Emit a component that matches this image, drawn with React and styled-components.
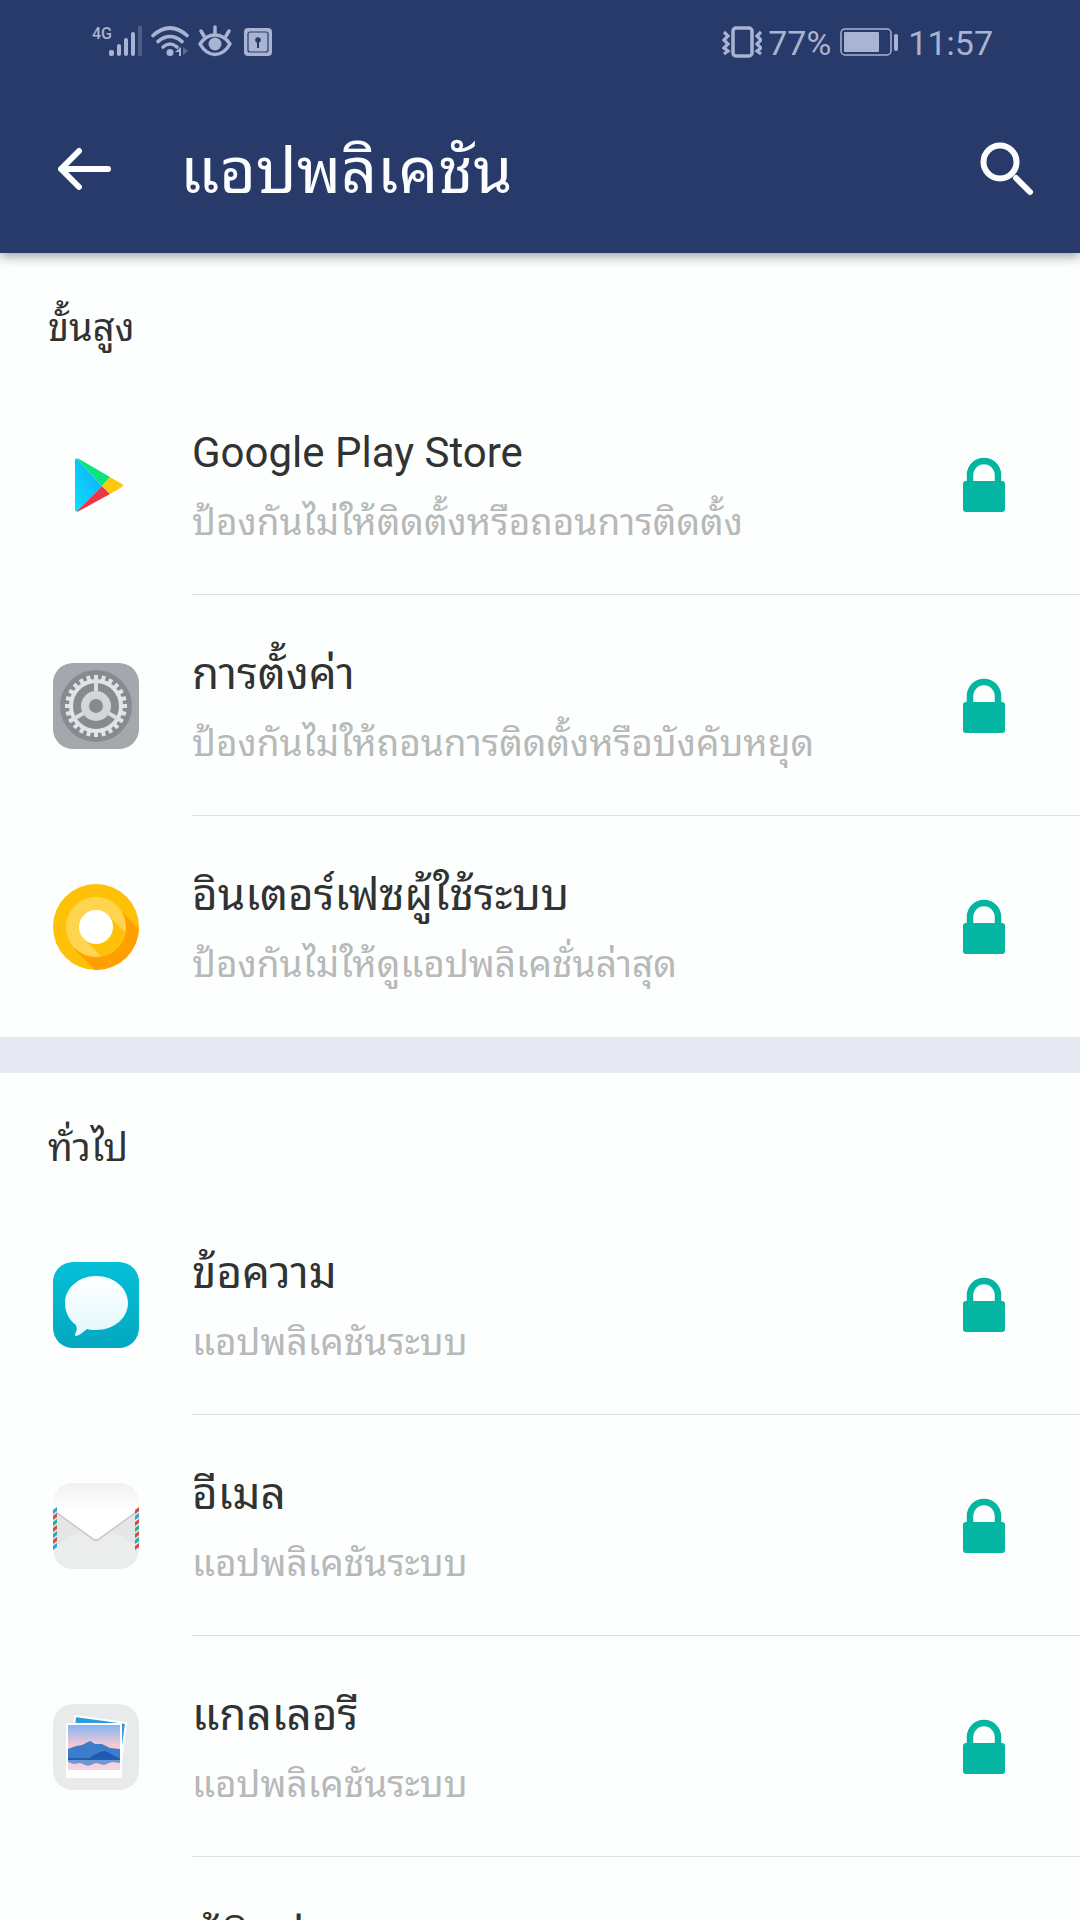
import styled, { createGlobalStyle } from "styled-components";

const advanced = [
    { icon: <PlayIcon />, name: "Google Play Store", lang: "en", detail: "ป้องกันไม่ให้ติดตั้งหรือถอนการติดตั้ง" },
    { icon: <SettingsIcon />, name: "การตั้งค่า", detail: "ป้องกันไม่ให้ถอนการติดตั้งหรือบังคับหยุด" },
    { icon: <SystemIcon />, name: "อินเตอร์เฟซผู้ใช้ระบบ", detail: "ป้องกันไม่ให้ดูแอปพลิเคชั่นล่าสุด" },
];

const general = [
    { icon: <MessageIcon />, name: "ข้อความ", detail: "แอปพลิเคชันระบบ" },
    { icon: <MailIcon />, name: "อีเมล", detail: "แอปพลิเคชันระบบ" },
    { icon: <GalleryIcon />, name: "แกลเลอรี", detail: "แอปพลิเคชันระบบ" },
    { icon: <ContactsIcon />, name: "ผู้ติดต่อ", detail: "แอปพลิเคชันระบบ" },
];

export default function App() {
    return (
        <Screen>
            <GlobalStyle />
            <Header>
                <StatusBar>
                    <StatusGroup>
                        <SignalIcons />
                    </StatusGroup>
                    <StatusGroup>
                        <VibrateIcon />
                        <span>77%</span>
                        <BatteryIcon />
                        <span>11:57</span>
                    </StatusGroup>
                </StatusBar>
                <Toolbar>
                    <IconButton aria-label="กลับ"><BackIcon /></IconButton>
                    <Title>แอปพลิเคชัน</Title>
                    <IconButton aria-label="ค้นหา"><SearchIcon /></IconButton>
                </Toolbar>
            </Header>
            <AppSection title="ขั้นสูง" apps={advanced} />
            <AppSection title="ทั่วไป" apps={general} />
        </Screen>
    )
}

function AppSection({ title, apps }) {
    return (
        <Section>
            <SectionTitle>{title}</SectionTitle>
            <List>
                {apps.map(app => (
                    <Row key={app.name}>
                        <AppIcon>{app.icon}</AppIcon>
                        <RowBody>
                            <Texts>
                                <AppName $latin={app.lang === "en"}>{app.name}</AppName>
                                <Detail>{app.detail}</Detail>
                            </Texts>
                            <IconButton aria-label={"ล็อก " + app.name}><LockIcon /></IconButton>
                        </RowBody>
                    </Row>
                ))}
            </List>
        </Section>
    )
}

function SignalIcons() {
    return (
        <svg width="184" height="36" viewBox="0 0 184 36" fill="#a9b4d2">
            <text x="0" y="14" fontSize="16" fontWeight="500" fontFamily="Roboto, sans-serif">4G</text>
            <rect x="17" y="25" width="5" height="6" rx="2" />
            <rect x="25" y="19" width="4" height="12" rx="2" />
            <rect x="32" y="13" width="4" height="18" rx="2" />
            <rect x="39" y="7" width="4" height="24" rx="2" />
            <rect x="46" y="1" width="4" height="30" rx="1" opacity="0.3" />
            <g fill="none" stroke="#a9b4d2" strokeWidth="3.6" strokeLinecap="round">
                <path d="M61 10.500Q78 -4.500 95 10.500" />
                <path d="M66 16.500Q78 6.500 90 16.500" />
                <path d="M71 22Q78 16 85 22" />
            </g>
            <circle cx="78" cy="27.500" r="3.500" />
            <path d="M83 27l6-5v9h-2v-4z" />
            <path d="M91 22l5 4-5 4z" opacity="0.4" />
            <g fill="none" stroke="#a9b4d2" strokeWidth="3.500" strokeLinecap="round">
                <path d="M108 19C116 7 130 7 138 19C130 33 116 33 108 19Z" strokeLinejoin="round" />
                <path d="M123 2v6M109 6l3 5M137 6l-3 5" />
            </g>
            <circle cx="123" cy="19" r="6.500" />
            <rect x="152" y="3" width="28" height="28" rx="4" />
            <rect x="156" y="7" width="20" height="20" rx="2" fill="none" stroke="#283a69" strokeWidth="1.200" />
            <circle cx="166" cy="15" r="2.800" fill="#283a69" />
            <path d="M165 15h2v8h-2z" fill="#283a69" />
        </svg>
    )
}

function VibrateIcon() {
    return (
        <svg width="40" height="36" viewBox="0 0 40 36" fill="none" stroke="#a9b4d2" strokeWidth="3.500">
            <rect x="11" y="3" width="19" height="28" rx="3" />
            <path d="M2 7l4 4-4 4 4 4-4 4 4 3-4 3M39 7l-4 4 4 4-4 4 4 4-4 3 4 3" strokeWidth="3.200" />
        </svg>
    )
}

function BatteryIcon() {
    return (
        <Battery width="58" height="30" viewBox="0 0 58 30" fill="#a9b4d2">
            <rect x="1" y="1" width="50" height="26" rx="4" fill="none" stroke="#a9b4d2" strokeWidth="1.500" />
            <rect x="4" y="4" width="35" height="20" rx="1" />
            <rect x="54" y="6" width="4" height="17" rx="2" />
        </Battery>
    )
}

function BackIcon() {
    return (
        <svg width="56" height="46" viewBox="0 0 56 46" fill="none" stroke="#fbfdff" strokeWidth="6" strokeLinecap="round" strokeLinejoin="round">
            <path d="M50 22H4M21 4L3 22l18 18" />
        </svg>
    )
}

function SearchIcon() {
    return (
        <svg width="56" height="58" viewBox="0 0 56 58" fill="none" stroke="#fbfdff" strokeWidth="6" strokeLinecap="round">
            <circle cx="22" cy="21" r="16.500" />
            <path d="M38 37l14 14" />
        </svg>
    )
}

function LockIcon() {
    return (
        <svg width="44" height="56" viewBox="0 0 44 56">
            <path d="M8 28v-9a14 14 0 0 1 28 0v9" fill="none" stroke="#04b6a2" strokeWidth="6.500" />
            <rect x="1" y="25" width="42" height="31" rx="3" fill="#04b6a2" />
        </svg>
    )
}

function PlayIcon() {
    return (
        <svg width="88" height="88" viewBox="0 0 88 88">
            <defs>
                <linearGradient id="playBlue" x1="1" y1="0" x2="0" y2="1">
                    <stop offset="0" stopColor="#12a8f8" />
                    <stop offset="1" stopColor="#08e0ff" />
                </linearGradient>
            </defs>
            <path d="M23 19.500v49q0 2 1.500 2L50 45 24.500 17.500Q23 17.500 23 19.500z" fill="url(#playBlue)" />
            <path d="M24.500 17.500Q26 17 28 18.500L58 36l-8 9z" fill="#0be37c" />
            <path d="M24.500 70.500Q26 71 28 69.500L58 53l-8-8z" fill="#ee3448" />
            <path d="M58 36l12 7q2 1.500 0 3L58 53l-8-8z" fill="#ffc70a" />
        </svg>
    )
}

function SettingsIcon() {
    const teeth = Array.from({ length: 24 }, (_, i) => i * 15)
    return (
        <svg width="88" height="88" viewBox="0 0 88 88">
            <rect x="1" y="1" width="86" height="86" rx="20" fill="#a3a8ad" />
            <circle cx="44" cy="44" r="36" fill="#858b90" />
            <circle cx="44" cy="44" r="25" fill="none" stroke="#e2e4e5" strokeWidth="4" />
            {teeth.map(angle => (
                <rect key={angle} x="42" y="13" width="4" height="6" fill="#e2e4e5" transform={`rotate(${angle} 44 44)`} />
            ))}
            {[0, 120, 240].map(angle => (
                <rect key={angle} x="42" y="18" width="4" height="18" fill="#dcdedf" transform={`rotate(${angle} 44 44)`} />
            ))}
            <circle cx="44" cy="44" r="11" fill="none" stroke="#d3d6d8" strokeWidth="8" />
        </svg>
    )
}

function SystemIcon() {
    return (
        <svg width="88" height="88" viewBox="0 0 88 88">
            <clipPath id="outer"><circle cx="44" cy="44" r="43" /></clipPath>
            <clipPath id="inner"><circle cx="44" cy="44" r="30" /></clipPath>
            <circle cx="44" cy="44" r="43" fill="#ffc107" />
            <path d="M64 23L130 89L86 130L22 66z" fill="#ff9f00" clipPath="url(#outer)" />
            <circle cx="44" cy="44" r="30" fill="#ffd54f" />
            <path d="M56 32l40 40-24 24-40-40z" fill="#ffc107" clipPath="url(#inner)" />
            <circle cx="44" cy="44" r="17" fill="#fff" />
        </svg>
    )
}

function MessageIcon() {
    return (
        <svg width="88" height="88" viewBox="0 0 88 88">
            <defs>
                <linearGradient id="teal" x2="0" y2="1">
                    <stop offset="0" stopColor="#05bfd8" />
                    <stop offset="1" stopColor="#04a8c0" />
                </linearGradient>
                <linearGradient id="bubble" x2="0" y2="1">
                    <stop offset="0" stopColor="#fff" />
                    <stop offset="1" stopColor="#e0f8fd" />
                </linearGradient>
            </defs>
            <rect x="1" y="1" width="86" height="86" rx="20" fill="url(#teal)" />
            <path d="M44 15c18 0 32 12 32 27S62 69 44 69c-3 0-6 0-9-1-4 3-8 7-11 7-1 0-1-1-1-2 2-3 2-6 1-9C17 59 13 51 13 42c0-15 14-27 31-27z" fill="url(#bubble)" />
        </svg>
    )
}

function MailIcon() {
    const left = ["#2ba6d6", "#d0503f", "#1fb3a8", "#d0503f", "#1fb3a8", "#d0503f", "#2ba6d6"]
    const right = ["#d0503f", "#2ba6d6", "#d0503f", "#1fb3a8", "#d0503f", "#1fb3a8", "#d0503f"]
    return (
        <svg width="88" height="88" viewBox="0 0 88 88">
            <defs>
                <linearGradient id="flap" x2="0" y2="1">
                    <stop offset="0" stopColor="#f0f1f2" />
                    <stop offset="0.500" stopColor="#fff" />
                </linearGradient>
            </defs>
            <rect x="1" y="1" width="86" height="86" rx="20" fill="#ebecec" />
            <path d="M1 28L28 49 1 65zM87 28L60 49l27 16z" fill="#e3e5e7" />
            <path d="M4 30L41 57q3 2 6 0L84 30" fill="none" stroke="#c9cbce" strokeWidth="2" />
            <path d="M1 27V21A20 20 0 0 1 21 1H67A20 20 0 0 1 87 21V27L47 56q-3 2-6 0z" fill="url(#flap)" />
            {left.map((color, i) => (
                <path key={i} d={`M1 ${28 + i * 6}l4-3v4l-4 3z`} fill={color} />
            ))}
            {right.map((color, i) => (
                <path key={i} d={`M83 ${28 + i * 6}l4-3v4l-4 3z`} fill={color} />
            ))}
        </svg>
    )
}

function GalleryIcon() {
    return (
        <svg width="88" height="88" viewBox="0 0 88 88">
            <defs>
                <linearGradient id="sky" x2="0" y2="1">
                    <stop offset="0" stopColor="#84b5f3" />
                    <stop offset="0.450" stopColor="#f5c9d2" />
                    <stop offset="1" stopColor="#f5d5e4" />
                </linearGradient>
            </defs>
            <rect x="1" y="1" width="86" height="86" rx="20" fill="#e8eaeb" />
            <path d="M23 13l51 7-5 38-49-6z" fill="#2f9ae0" stroke="#fff" strokeWidth="2" />
            <rect x="14" y="20" width="56" height="55" rx="1" fill="#fff" />
            <rect x="16" y="22" width="52" height="45" fill="url(#sky)" />
            <path d="M16 46l8-3 6-1 8-4 5 3 7 0 8 4 10 1v11H16z" fill="#3c7ccb" />
            <path d="M36 56l8-5 4-2 5-1 6 3 9 5v3H36z" fill="#2059b0" />
            <path d="M16 56h52v4l-8-1-8 3-8-2-8 3-8-3-6 1-6-2z" fill="#6f97d3" />
            <rect x="16" y="55" width="52" height="2" fill="#1f5fae" />
        </svg>
    )
}

function ContactsIcon() {
    return (
        <svg width="88" height="88" viewBox="0 0 88 88">
            <rect x="1" y="1" width="86" height="86" rx="20" fill="#f5a623" />
            <circle cx="44" cy="34" r="14" fill="#fff" />
            <path d="M18 70a26 20 0 0 1 52 0z" fill="#fff" />
        </svg>
    )
}

const GlobalStyle = createGlobalStyle`
body {
    margin: 0;
    background-color: #fdfffe;
    font-family: Roboto, "Noto Sans Thai Looped", "Noto Sans", sans-serif;
}
`
const Screen = styled.div`
height: 100vh;
overflow: hidden;
display: flex;
flex-direction: column;
`
const Header = styled.header`
flex-shrink: 0;
color: #fbfdff;
background-color: #283a69;
box-shadow: 0 4px 10px rgba(30, 30, 60, 0.4);
`
const StatusBar = styled.div`
height: 86px;
padding: 0 87px 0 92px;
box-sizing: border-box;
display: flex;
justify-content: space-between;
align-items: center;
color: #a9b4d2;
font-size: 34px;
`
const StatusGroup = styled.div`
display: flex;
align-items: center;
gap: 6px;
`
const Battery = styled.svg`
margin: 0 4px 0 3px;
`
const Toolbar = styled.div`
height: 167px;
padding: 0 46px 0 58px;
box-sizing: border-box;
display: flex;
align-items: center;
`
const IconButton = styled.button`
display: flex;
padding: 0;
border: none;
background: none;
cursor: pointer;
`
const Title = styled.h1`
flex: 1;
margin: 0 0 0 66px;
padding-top: 4px;
font-size: 63px;
font-weight: 400;
line-height: 80px;
`
const Section = styled.section`
flex-shrink: 0;
& + & {
    border-top: 36px solid #e6e9f2;
}
`
const SectionTitle = styled.h2`
height: 121px;
margin: 0;
padding: 51px 48px 0;
box-sizing: border-box;
font-size: 38px;
font-weight: 400;
line-height: 48px;
color: #303332;
`
const List = styled.ul`
margin: 0;
padding: 0;
list-style: none;
`
const Row = styled.li`
height: 221px;
display: flex;
align-items: center;
`
const AppIcon = styled.div`
width: 88px;
height: 88px;
margin: 0 52px;
`
const RowBody = styled.div`
flex: 1;
height: 100%;
padding-right: 74px;
box-sizing: border-box;
display: flex;
align-items: center;
justify-content: space-between;
border-bottom: 1px solid #dce1e1;

${Row}:last-child & {
    border-bottom-color: transparent;
}
`
const Texts = styled.div`
padding-top: 4px;
display: flex;
flex-direction: column;
gap: 14px;
`
const AppName = styled.div`
font-size: ${props => props.$latin ? "42px" : "44px"};
line-height: 60px;
color: #303332;
`
const Detail = styled.div`
font-size: 37px;
line-height: 52px;
color: #b7b9b9;
`
